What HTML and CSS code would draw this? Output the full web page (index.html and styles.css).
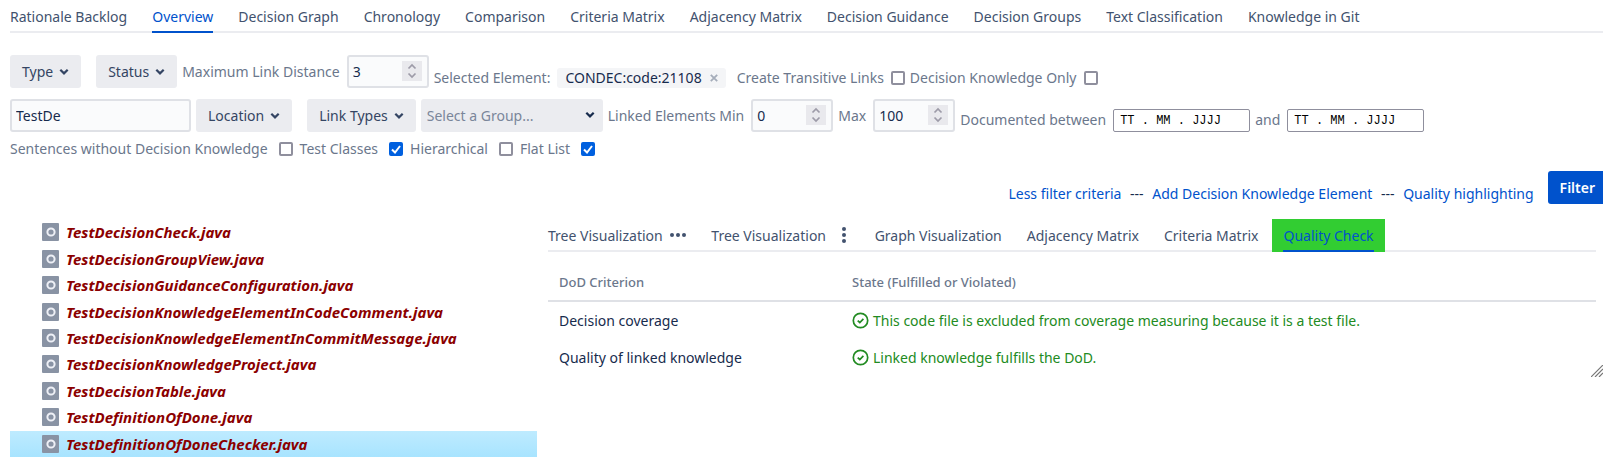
FILE: index.html
```html
<!DOCTYPE html>
<html lang="en">
<head>
<meta charset="utf-8">
<title>Overview</title>
<link rel="stylesheet" href="styles.css">
</head>
<body>
<svg class="defs" aria-hidden="true">
  <symbol id="chevron" viewBox="0 0 10 8"><path d="M1.3 1.8 5 5.4 8.7 1.8" fill="none" stroke="currentColor" stroke-width="2.2"/></symbol>
  <symbol id="spin" viewBox="0 0 20 20"><path d="M0 0h20v20H0z" fill="#e9e9ed"/><path d="M6.5 7.5 10 4l3.5 3.5M6.5 12.5 10 16l3.5-3.5" fill="none" stroke="#9d9ba8" stroke-width="1.7"/></symbol>
  <symbol id="code" viewBox="0 0 17 18"><rect width="17" height="18" rx="1" fill="#8993a4"/><circle cx="9" cy="9" r="3.6" fill="none" stroke="#eef0f6" stroke-width="2"/></symbol>
  <symbol id="ok" viewBox="0 0 17 17"><circle cx="8.5" cy="8.5" r="7.2" fill="none" stroke="currentColor" stroke-width="1.7"/><path d="M5.7 8.6 7.8 10.5 11.4 6.9" fill="none" stroke="currentColor" stroke-width="1.7"/></symbol>
</svg>
<nav class="tabs">
  <a href="#">Rationale Backlog</a>
  <a href="#" class="active">Overview</a>
  <a href="#">Decision Graph</a>
  <a href="#">Chronology</a>
  <a href="#">Comparison</a>
  <a href="#">Criteria Matrix</a>
  <a href="#">Adjacency Matrix</a>
  <a href="#">Decision Guidance</a>
  <a href="#">Decision Groups</a>
  <a href="#">Text Classification</a>
  <a href="#">Knowledge in Git</a>
</nav>
<form class="filters">
  <div class="row">
    <button type="button" class="drop spaced">Type <svg><use href="#chevron"/></svg></button>
    <button type="button" class="drop">Status <svg><use href="#chevron"/></svg></button>
    <label for="dist">Maximum Link Distance</label>
    <span class="number"><input id="dist" type="text" value="3"><svg><use href="#spin"/></svg></span>
    <span class="low">Selected Element:</span>
    <span class="chip">CONDEC:code:21108 <button type="button" aria-label="Remove"><svg viewBox="0 0 8 8"><path d="M.8.8 7.2 7.2M7.2.8.8 7.2" stroke="currentColor" stroke-width="1.8"/></svg></button></span>
    <label class="low" for="trans">Create Transitive Links</label>
    <input class="low" id="trans" type="checkbox">
    <label class="low" for="dko">Decision Knowledge Only</label>
    <input class="low" id="dko" type="checkbox">
  </div>
  <div class="row">
    <input class="search" type="text" value="TestDe" aria-label="Search">
    <button type="button" class="drop spaced">Location <svg><use href="#chevron"/></svg></button>
    <button type="button" class="drop">Link Types <svg><use href="#chevron"/></svg></button>
    <span class="select"><select aria-label="Group"><option>Select a Group...</option></select><svg><use href="#chevron"/></svg></span>
    <label for="min">Linked Elements Min</label>
    <span class="number"><input id="min" type="text" value="0"><svg><use href="#spin"/></svg></span>
    <label for="max">Max</label>
    <span class="number"><input id="max" type="text" value="100"><svg><use href="#spin"/></svg></span>
    <label class="base" for="from">Documented between</label>
    <input class="date" id="from" type="text" value="TT . MM . JJJJ">
    <label class="base" for="to">and</label>
    <input class="date" id="to" type="text" value="TT . MM . JJJJ">
  </div>
  <div class="row checks">
    <label>Sentences without Decision Knowledge <input type="checkbox"></label>
    <label>Test Classes <input type="checkbox" checked></label>
    <label>Hierarchical <input type="checkbox"></label>
    <label>Flat List <input type="checkbox" checked></label>
  </div>
  <div class="actions">
    <p><a href="#">Less filter criteria</a> <span>---</span> <a href="#">Add Decision Knowledge Element</a> <span>---</span> <a href="#">Quality highlighting</a></p>
    <button type="button" class="primary">Filter</button>
  </div>
</form>
<main class="content">
  <ul class="tree">
    <li><svg><use href="#code"/></svg>TestDecisionCheck.java</li>
    <li><svg><use href="#code"/></svg>TestDecisionGroupView.java</li>
    <li><svg><use href="#code"/></svg>TestDecisionGuidanceConfiguration.java</li>
    <li><svg><use href="#code"/></svg>TestDecisionKnowledgeElementInCodeComment.java</li>
    <li><svg><use href="#code"/></svg>TestDecisionKnowledgeElementInCommitMessage.java</li>
    <li><svg><use href="#code"/></svg>TestDecisionKnowledgeProject.java</li>
    <li><svg><use href="#code"/></svg>TestDecisionTable.java</li>
    <li><svg><use href="#code"/></svg>TestDefinitionOfDone.java</li>
    <li class="selected"><svg><use href="#code"/></svg>TestDefinitionOfDoneChecker.java</li>
  </ul>
  <section class="detail">
    <nav class="tabs">
      <a href="#">Tree Visualization <svg class="dots" width="16" height="16"><g fill="currentColor"><circle cx="2" cy="8" r="2"/><circle cx="8" cy="8" r="2"/><circle cx="14" cy="8" r="2"/></g></svg></a>
      <a href="#">Tree Visualization <svg class="dots" width="16" height="16"><g fill="currentColor"><circle cx="10" cy="2" r="2"/><circle cx="10" cy="8" r="2"/><circle cx="10" cy="14" r="2"/></g></svg></a>
      <a href="#">Graph Visualization</a>
      <a href="#">Adjacency Matrix</a>
      <a href="#">Criteria Matrix</a>
      <span class="passed"><a href="#" class="active">Quality Check</a></span>
    </nav>
    <table>
      <thead><tr><th>DoD Criterion</th><th>State (Fulfilled or Violated)</th></tr></thead>
      <tbody>
        <tr><td>Decision coverage</td><td class="ok"><svg><use href="#ok"/></svg>This code file is excluded from coverage measuring because it is a test file.</td></tr>
        <tr><td>Quality of linked knowledge</td><td class="ok"><svg><use href="#ok"/></svg>Linked knowledge fulfills the DoD.</td></tr>
      </tbody>
    </table>
    <svg class="grip" viewBox="0 0 12 12"><path d="M0 12 12 0M4 12 12 4M8 12 12 8" stroke="#777" stroke-width="1.2"/></svg>
  </section>
</main>
</body>
</html>
```
FILE: styles.css
```css
* { box-sizing: border-box; }
body {
  margin: 0;
  padding-left: 10px;
  overflow: hidden;
  background: #fff;
  color: #172b4d;
  font: 14px/20px "Noto Sans", sans-serif;
}
.defs { display: none; }
a { color: #0052cc; text-decoration: none; }
button, input, select { font: inherit; color: inherit; margin: 0; }

.tabs {
  display: flex;
  gap: 25px;
  box-shadow: inset 0 -2px #ebecf0;
  white-space: nowrap;
}
.tabs a { display: block; height: 33px; padding-top: 7px; color: #42526e; }
.tabs a.active { color: #0052cc; border-bottom: 2px solid #0052cc; }
.dots { margin-left: 4px; vertical-align: -2px; }

.filters { padding-top: 22px; color: #6b778c; }
.row {
  display: flex;
  align-items: center;
  gap: 5px;
  height: 33px;
  margin-bottom: 11px;
  white-space: nowrap;
}
.row label { padding-right: 2px; }
.drop {
  display: flex;
  align-items: center;
  gap: 6px;
  height: 33px;
  padding: 0 12px;
  border: 0;
  border-radius: 3px;
  background: #ebecf0;
  color: #344563;
}
.drop svg, .select svg { width: 10px; height: 8px; }
.spaced { margin-right: 10px; }
.number { position: relative; display: flex; }
.number input {
  width: 82px;
  height: 33px;
  padding: 0 4px;
  border: 2px solid #dfe1e6;
  border-radius: 3px;
  background: #fafbfc;
  color: #172b4d;
}
.number svg { position: absolute; right: 7px; top: 6px; width: 20px; height: 20px; }
.low { align-self: flex-end; }
.chip {
  display: flex;
  align-self: flex-end;
  align-items: center;
  gap: 8px;
  margin: 0 6px 0 2px;
  padding: 0 8px;
  border-radius: 3px;
  background: #f4f5f7;
  color: #172b4d;
}
.chip button { display: flex; padding: 0; border: 0; background: none; color: #a5adba; }
.chip svg { width: 8px; height: 8px; }
input[type="checkbox"] {
  appearance: none;
  width: 14px;
  height: 14px;
  border: 2px solid #8f8f9d;
  border-radius: 2px;
  background: #fff;
}
input[type="checkbox"]:checked {
  border-color: #0060df;
  background: #0060df url("data:image/svg+xml,%3Csvg xmlns='http://www.w3.org/2000/svg' viewBox='0 0 10 10'%3E%3Cpath d='M1 5.5 4 8.5 9 2' fill='none' stroke='%23fff' stroke-width='2'/%3E%3C/svg%3E") center / 10px 10px no-repeat;
}
input.low { margin-bottom: 3px; }
.search {
  width: 181px;
  height: 33px;
  padding: 0 4px;
  border: 2px solid #dfe1e6;
  border-radius: 3px;
  background: #fafbfc;
  color: #172b4d;
}
.select { position: relative; display: flex; }
.select select {
  width: 182px;
  height: 33px;
  padding: 0 6px;
  appearance: none;
  border: 0;
  border-radius: 3px;
  background: #ebecf0;
  color: #7a869a;
}
.select svg { position: absolute; right: 8px; top: 12px; color: #172b4d; }
.base { padding-top: 8px; }
.date {
  align-self: flex-end;
  width: 137px;
  height: 23px;
  padding: 0 6px;
  border: 1px solid #8f8f9d;
  border-radius: 2px;
  background: #fff;
  color: #000;
  font: 12px "Liberation Mono", monospace;
}
.checks { height: 20px; margin: -4px 0 0; }
.checks label { display: flex; align-items: center; gap: 11px; }

.actions { display: flex; justify-content: flex-end; align-items: flex-start; height: 60px; padding-top: 12px; color: #172b4d; }
.actions p { margin: 13px 14px 0 0; }
.actions span { padding: 0 5px; }
.primary {
  height: 33px;
  padding: 0 8px 0 12px;
  border: 0;
  border-radius: 3px 0 0 3px;
  background: #0052cc;
  color: #fff;
  font-weight: 600;
}

.content { display: flex; gap: 11px; }
.tree {
  display: grid;
  grid-auto-rows: 1fr;
  flex: 0 0 527px;
  min-height: 238px;
  margin: 0;
  padding: 0;
  list-style: none;
  color: #8b0000;
  font-size: 15px;
  font-weight: 700;
  font-style: italic;
}
.tree li { display: flex; align-items: center; gap: 7px; padding-left: 32px; }
.tree svg { width: 17px; height: 18px; }
.selected { background: linear-gradient(#beebff, #a8e4ff); }
.detail { position: relative; flex: 1; padding-right: 7px; align-self: flex-start; }
.passed { margin-left: -11px; padding: 0 11px; background: #32cd32; }
table { width: 100%; margin-top: 12px; border-collapse: collapse; text-align: left; }
th { padding: 7px 11px; color: #6b778c; font-size: 13px; font-weight: 500; border-bottom: 2px solid #dfe1e6; }
th:first-child { width: 293px; }
thead tr { height: 37px; }
td { height: 38px; padding: 0 11px; }
.ok { color: #228b22; }
.ok svg { width: 17px; height: 17px; margin-right: 4px; vertical-align: -3px; }
.grip { position: absolute; right: 0; bottom: 0; width: 12px; height: 12px; }
```
